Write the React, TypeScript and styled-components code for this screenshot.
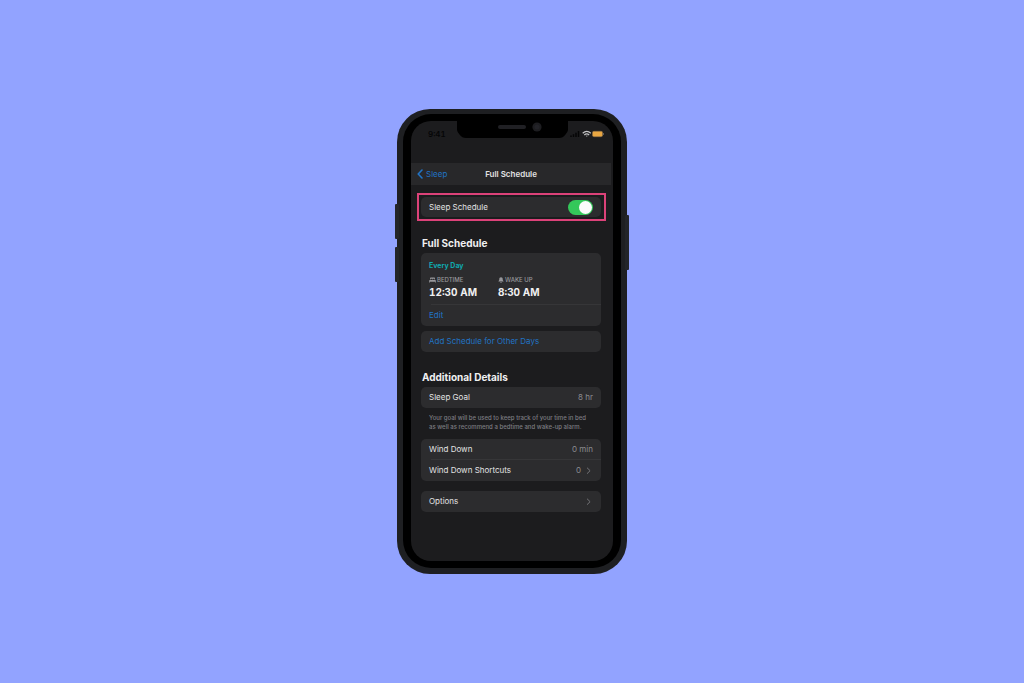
import React from "react";
import styled, { createGlobalStyle } from "styled-components";

const GlobalStyle = createGlobalStyle`
  *, *::before, *::after { box-sizing: border-box; }
  body { margin: 0; background: #92a3ff; }
  button { margin: 0; padding: 0; border: 0; background: none; font: inherit; color: inherit; cursor: pointer; text-align: left; }
  h1, h2, p, dl, dt, dd { margin: 0; }
`;

const Page = styled.main`
  min-height: 100vh;
  display: flex;
  align-items: center;
  justify-content: center;
  background: #92a3ff;
  font-family: Inter, "Liberation Sans", sans-serif;
  font-size: 8px;
  line-height: 11px;
  color: #e2e2e3;
`;

const Phone = styled.div`
  position: relative;
  width: 230px;
  padding: 5px 6px 6px;
  border-radius: 33px;
  background: #1e1f22;
`;

const SideKey = styled.span<{ $side: "left" | "right"; $top: number; $length: number }>`
  position: absolute;
  ${(p) => p.$side}: -2px;
  top: ${(p) => p.$top}px;
  width: 4px;
  height: ${(p) => p.$length}px;
  border-radius: 1px;
  background: #232529;
`;

const Bezel = styled.div`
  padding: 7px 8px;
  border-radius: 28px;
  background: #000;
`;

const Screen = styled.div`
  position: relative;
  padding-bottom: 49px;
  border-radius: 20px;
  background: #1c1c1e;
`;

const Notch = styled.div`
  position: absolute;
  top: -2px;
  left: 46px;
  width: 111px;
  height: 19px;
`;

const StatusBar = styled.div`
  height: 42px;
  padding: 8px 9px 0 17px;
  display: flex;
  align-items: flex-start;
  justify-content: space-between;
  color: #050506;
`;

const Clock = styled.span`
  font-weight: 600;
  font-variant-numeric: tabular-nums;
`;

const StatusIcons = styled.svg`
  display: block;
  margin-top: 1px;
`;

const NavBar = styled.header`
  height: 22px;
  margin: 0 2px 0 0;
  padding: 0 6px;
  display: grid;
  grid-template-columns: 1fr auto 1fr;
  align-items: center;
  background: #28282a;
`;

const BackButton = styled.button`
  display: flex;
  align-items: center;
  gap: 3px;
  color: #2173c4;
`;

const NavTitle = styled.h1`
  font-size: 8px;
  line-height: 12px;
  font-weight: 600;
`;

const Highlight = styled.div`
  margin: 8px 7px 0 6px;
  padding: 2px 3px 2px 2px;
  border: 2px solid #dc4279;
`;

const Body = styled.div`
  padding: 0 12px 0 10px;
`;

const Card = styled.section<{ $gap?: number }>`
  margin-top: ${(p) => p.$gap ?? 0}px;
  border-radius: 5px;
  background: #2c2c2e;
`;

const Row = styled.div<{ $height?: number }>`
  height: ${(p) => p.$height ?? 21}px;
  width: 100%;
  padding: 0 8px;
  display: flex;
  align-items: center;
  justify-content: space-between;
`;

const LinkRow = styled(Row)`
  color: #2173c4;
`;

const Divider = styled.hr`
  height: 1px;
  margin: 0 0 0 10px;
  border: 0;
  background: #363638;
`;

const Value = styled.span`
  display: flex;
  align-items: center;
  gap: 4px;
  color: #8b8b90;
`;

const Heading = styled.h2<{ $gap: number }>`
  margin: ${(p) => p.$gap}px 0 3px 1px;
  font-size: 10px;
  line-height: 14px;
  font-weight: 700;
  color: #f0f0f1;
`;

const Toggle = styled.input`
  appearance: none;
  position: relative;
  width: 25px;
  height: 15px;
  margin: 0;
  border-radius: 8px;
  background: #4a4a4d;
  cursor: pointer;

  &::after {
    content: "";
    position: absolute;
    top: 1px;
    left: 1px;
    width: 13px;
    height: 13px;
    border-radius: 50%;
    background: #fbfbfb;
  }
  &:checked { background: #34c85a; }
  &:checked::after { left: 11px; }
`;

const Schedule = styled.div`
  padding: 7px 8px 6px;
`;

const Days = styled.p`
  font-size: 7px;
  line-height: 11px;
  font-weight: 700;
  color: #10a8ae;
`;

const Times = styled.dl`
  margin-top: 5px;
  display: grid;
  grid-template-columns: 69px 1fr;
`;

const TimeLabel = styled.dt`
  display: flex;
  align-items: center;
  gap: 1px;
  font-size: 6px;
  line-height: 8px;
  font-weight: 500;
  color: #98989c;
`;

const Time = styled.dd`
  && { margin-top: 2px; }
  font-size: 10px;
  line-height: 12px;
  font-weight: 700;
  font-variant-numeric: tabular-nums;
  color: #f0f0f1;
`;

const Note = styled.p`
  && { margin: 5px 0 0 8px; }
  font-size: 6px;
  line-height: 9px;
  font-weight: 500;
  color: #7d7d82;
  white-space: nowrap;
`;

const Chevron = () => (
  <svg width="8" height="8" viewBox="0 0 8 8" fill="none" stroke="#737377" aria-hidden="true">
    <path d="M2.3 1 5.1 3.700 2.3 6.400" strokeLinecap="round" strokeLinejoin="round" />
  </svg>
);

export default function App() {
  return (
    <>
      <GlobalStyle />
      <Page>
        <Phone>
          <SideKey $side="left" $top={95} $length={35} />
          <SideKey $side="left" $top={138} $length={35} />
          <SideKey $side="right" $top={106} $length={55} />
          <Bezel>
            <Screen>
              <Notch>
                <svg width="111" height="19" viewBox="0 0 111 19" aria-hidden="true">
                  <path d="M0 0h111v11q-.2 2-2.500 4.500Q106 19 102 19H9Q5 19 2.500 15.500 .2 13 0 11z" fill="#000" />
                  <rect x="41" y="6" width="28" height="4" rx="2" fill="#202024" />
                  <circle cx="80" cy="8" r="4.600" fill="#1d1d20" />
                  <circle cx="80" cy="8" r="2.500" fill="#232328" />
                </svg>
              </Notch>
              <StatusBar>
                <Clock>9:41</Clock>
                <StatusIcons width="34" height="8" viewBox="0 0 34 8" aria-hidden="true">
                  <path d="M1 7V5.500M3.500 7V4.200M6 7V2.700M8.500 7V1" stroke="#050506" strokeWidth="1.500" />
                  <path d="M12.700 3.300c2.400-2.200 5.700-2.200 8.100 0M14.300 5c1.500-1.300 3.400-1.300 4.900 0" fill="none" stroke="#c4c4c6" strokeWidth="1.200" />
                  <path d="M15.600 5.800q1.150-.8 2.300 0L16.750 7z" fill="#8a8a8c" />
                  <rect x="22.500" y="1.300" width="10" height="5.400" rx="1.400" fill="#e9a742" stroke="#8f7147" strokeWidth=".6" />
                  <path d="M33.400 3v2" stroke="#77777a" strokeWidth=".8" />
                </StatusIcons>
              </StatusBar>

              <NavBar>
                <BackButton type="button">
                  <svg width="6" height="10" viewBox="0 0 6 10" fill="none" stroke="#2173c4" strokeWidth="1.600" aria-hidden="true">
                    <path d="M5 1 1.200 5 5 9" strokeLinecap="round" strokeLinejoin="round" />
                  </svg>
                  Sleep
                </BackButton>
                <NavTitle>Full Schedule</NavTitle>
              </NavBar>

              <Highlight>
                <Card>
                  <Row as="label" $height={20}>
                    Sleep Schedule
                    <Toggle type="checkbox" defaultChecked />
                  </Row>
                </Card>
              </Highlight>

              <Body>
                <Heading $gap={15}>Full Schedule</Heading>
                <Card>
                  <Schedule>
                    <Days>Every Day</Days>
                    <Times>
                      <div>
                        <TimeLabel>
                          <svg width="7" height="6" viewBox="0 0 7 6" fill="#98989c" aria-hidden="true">
                            <path d="M1 2.500V1.200Q1 .5 1.700.5h3.600q.7 0 .7.700v1.300H5.300V1.800H3.800v.7H3.200v-.7H1.700v.7zM.8 2.900h5.400q.6 0 .6.600v2H6v-.8H1v.8H.2v-2q0-.6.6-.6z" />
                          </svg>
                          BEDTIME
                        </TimeLabel>
                        <Time>12:30 AM</Time>
                      </div>
                      <div>
                        <TimeLabel>
                          <svg width="6" height="6" viewBox="0 0 6 6" fill="#98989c" aria-hidden="true">
                            <path d="M3 .2c1.200 0 1.700.8 1.700 1.800 0 1.200.3 1.600.8 2.100v.5h-5v-.5c.5-.5.8-.9.8-2.100C1.300 1 1.800.2 3 .2zM2.200 4.900h1.600Q3.600 5.800 3 5.800t-.8-.9z" />
                          </svg>
                          WAKE UP
                        </TimeLabel>
                        <Time>8:30 AM</Time>
                      </div>
                    </Times>
                  </Schedule>
                  <Divider />
                  <LinkRow as="button" type="button">Edit</LinkRow>
                </Card>
                <Card $gap={5}>
                  <LinkRow as="button" type="button">Add Schedule for Other Days</LinkRow>
                </Card>

                <Heading $gap={18}>Additional Details</Heading>
                <Card>
                  <Row>
                    Sleep Goal
                    <Value>8 hr</Value>
                  </Row>
                </Card>
                <Note>
                  Your goal will be used to keep track of your time in bed
                  <br />
                  as well as recommend a bedtime and wake-up alarm.
                </Note>
                <Card $gap={8}>
                  <Row $height={20}>
                    Wind Down
                    <Value>0 min</Value>
                  </Row>
                  <Divider />
                  <Row as="button" type="button">
                    Wind Down Shortcuts
                    <Value>
                      0
                      <Chevron />
                    </Value>
                  </Row>
                </Card>
                <Card $gap={10}>
                  <Row as="button" type="button">
                    Options
                    <Chevron />
                  </Row>
                </Card>
              </Body>
            </Screen>
          </Bezel>
        </Phone>
      </Page>
    </>
  );
}
